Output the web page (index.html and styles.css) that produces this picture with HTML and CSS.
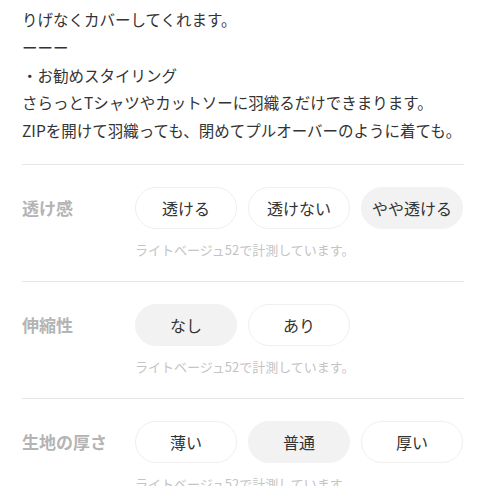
FILE: index.html
```html
<!DOCTYPE html>
<html lang="ja">

<head>
  <meta charset="UTF-8">
  <meta name="viewport" content="width=device-width, initial-scale=1.0">
  <title>商品詳細</title>
  <link rel="stylesheet" href="styles.css">
</head>

<body>
  <div class="page">
    <div class="description">
      <p>りげなくカバーしてくれます。</p>
      <p>ーーー</p>
      <p>・お勧めスタイリング</p>
      <p>さらっとTシャツやカットソーに羽織るだけできまります。</p>
      <p>ZIPを開けて羽織っても、閉めてプルオーバーのように着ても。</p>
    </div>

    <div class="spec">
      <div class="spec-row">
        <div class="spec-label">透け感</div>
        <div class="options">
          <span class="option">透ける</span>
          <span class="option">透けない</span>
          <span class="option selected">やや透ける</span>
        </div>
      </div>
      <div class="note">ライトベージュ52で計測しています。</div>
    </div>

    <div class="spec">
      <div class="spec-row">
        <div class="spec-label">伸縮性</div>
        <div class="options">
          <span class="option selected">なし</span>
          <span class="option">あり</span>
        </div>
      </div>
      <div class="note">ライトベージュ52で計測しています。</div>
    </div>

    <div class="spec">
      <div class="spec-row">
        <div class="spec-label">生地の厚さ</div>
        <div class="options">
          <span class="option">薄い</span>
          <span class="option selected">普通</span>
          <span class="option">厚い</span>
        </div>
      </div>
      <div class="note">ライトベージュ52で計測しています。</div>
    </div>
  </div>
</body>

</html>
```

FILE: styles.css
```css
body {
  margin: 0;
  padding: 0;
  background: #fff;
  font-family: "Noto Sans CJK JP", "Noto Sans", sans-serif;
  color: #333;
}

.page {
  padding: 6px 22px 0 22px;
}

.description {
  font-size: 15.5px;
  line-height: 27.75px;
  margin-bottom: 19px;
}

.description p {
  margin: 0;
}

.spec {
  border-top: 1px solid #e6e6e6;
  padding: 22px 0 23px 0;
}

.spec-row {
  display: flex;
  align-items: center;
}

.spec-label {
  width: 113px;
  flex-shrink: 0;
  font-size: 17px;
  font-weight: bold;
  color: #b4b4b4;
}

.options {
  display: grid;
  grid-template-columns: repeat(3, 102px);
  gap: 11px;
}

.option {
  height: 42px;
  border-radius: 21px;
  border: 1px solid #efefef;
  box-sizing: border-box;
  display: flex;
  align-items: center;
  justify-content: center;
  font-size: 16px;
  color: #333;
}

.option.selected {
  background: #f2f2f2;
  border-color: #f2f2f2;
}

.note {
  margin: 12px 0 0 113px;
  font-size: 13px;
  line-height: 17px;
  color: #c4c4c4;
}
```
